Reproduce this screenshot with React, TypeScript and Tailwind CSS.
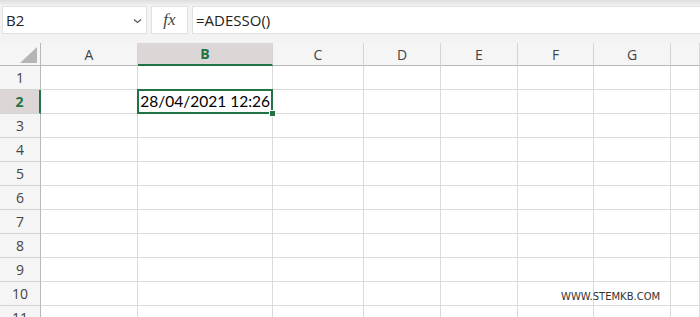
import React from 'react';

const cols = [
  { label: '', w: 'w-[41px]' },
  { label: 'A', w: 'w-[97px]' },
  { label: 'B', w: 'w-[135px]' },
  { label: 'C', w: 'w-[91px]' },
  { label: 'D', w: 'w-[77px]' },
  { label: 'E', w: 'w-[77px]' },
  { label: 'F', w: 'w-[76px]' },
  { label: 'G', w: 'w-[77px]' },
  { label: '', w: 'w-[29px]' },
];

const rows = [1, 2, 3, 4, 5, 6, 7, 8, 9, 10, 11];

function ColumnHeader() {
  return (
    <div className="flex h-[23px] shrink-0">
      {cols.map((c, i) => {
        if (i === 0) {
          return (
            <div key={i} className={`${c.w} relative border-r border-b border-[#b8b8b8] bg-[#f5f5f5]`}>
              {/* select-all corner */}
              <div className="absolute left-[20px] top-[4px] w-[17px] h-[16px] bg-[#b5b5b5] [clip-path:polygon(100%_0,100%_100%,0_100%)]" />
            </div>
          );
        }
        const active = c.label === 'B';
        return (
          <div
            key={i}
            className={
              active
                ? `${c.w} flex items-center justify-center border-r border-r-[#d4d4d4] border-b-2 border-b-[#217346] bg-[#dcd6d6] text-[#217346] font-bold text-[14px]`
                : `${c.w} flex items-center justify-center border-r border-r-[#d4d4d4] border-b border-b-[#b8b8b8] bg-[#f5f5f5] text-[#444] text-[14px]`
            }
          >
            {c.label}
          </div>
        );
      })}
    </div>
  );
}

function Row({ n }: { n: number }) {
  const active = n === 2;
  return (
    <div className={active ? 'flex h-[24px] shrink-0 relative z-10' : 'flex h-[24px] shrink-0'}>
      <div
        className={
          active
            ? 'w-[41px] flex items-center justify-center border-r-2 border-r-[#217346] border-b border-b-[#d4d4d4] bg-[#dcd6d6] text-[#217346] font-bold text-[14px]'
            : 'w-[41px] flex items-center justify-center border-r border-r-[#b8b8b8] border-b border-b-[#d4d4d4] bg-[#f5f5f5] text-[#444] text-[14px]'
        }
      >
        {n}
      </div>
      {cols.slice(1).map((c, i) => {
        const sel = active && c.label === 'B';
        return (
          <div
            key={i}
            className={
              sel
                ? `${c.w} relative z-10 bg-white border-r border-b border-[#dadada]`
                : `${c.w} relative bg-white border-r border-b border-[#dadada]`
            }
          >
            {sel && (
              <>
                <div className="absolute -top-px -left-px -right-px -bottom-px border-2 border-[#217346]" />
                <div className="absolute inset-0 flex items-center justify-end pr-[2px] pt-[1px] whitespace-nowrap font-['Lato'] text-[15.5px] text-black">
                  28/04/2021 12:26
                </div>
                <div className="absolute -right-[4px] -bottom-[4px] w-[5px] h-[5px] bg-[#217346] border border-white box-content" />
              </>
            )}
          </div>
        );
      })}
    </div>
  );
}

export default function App() {
  return (
    <div className="w-[700px] h-[317px] overflow-hidden bg-[#f3f3f3] relative font-['Open_Sans',sans-serif] flex flex-col">
      <div className="h-[6px] shrink-0 bg-gradient-to-b from-[#dedede] to-[#f3f3f3]" />

      {/* formula bar */}
      <div className="flex h-[28px] shrink-0 pl-[2px] gap-[4px]">
        <div className="w-[145px] bg-white border border-[#e1e1e1] flex items-center justify-between pl-[3px] pr-[4px]">
          <span className="text-[15px] text-[#222]">B2</span>
          <svg width="9" height="6" viewBox="0 0 9 6" className="mt-[1px]">
            <path d="M1 1.5 L4.5 4.5 L8 1.5" fill="none" stroke="#555" strokeWidth="1.2" />
          </svg>
        </div>
        <div className="w-[37px] bg-white border border-[#e1e1e1] flex items-center justify-center">
          <span className="font-['Liberation_Serif',serif] italic text-[17px] text-[#444]">fx</span>
        </div>
        <div className="flex-1 bg-white border border-[#e1e1e1] border-r-0 flex items-center pl-[3px]">
          <span className="text-[15px] text-[#222]">=ADESSO()</span>
        </div>
      </div>

      <div className="h-[9px] shrink-0" />

      <ColumnHeader />
      {rows.map((n) => (
        <Row key={n} n={n} />
      ))}

      <div className="absolute left-[561px] top-[289px] font-['DejaVu_Sans',sans-serif] text-[10px] text-[#333]">
        WWW.STEMKB.COM
      </div>
    </div>
  );
}
